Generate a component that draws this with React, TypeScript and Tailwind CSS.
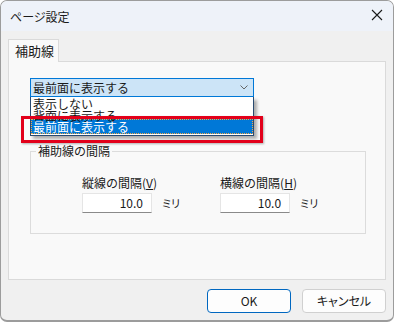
export default function App() {
  return (
    <div className="w-[395px] h-[323px] bg-white font-['Noto_Sans_CJK_JP',sans-serif] text-[#1a1a1a]">
      <div className="w-[394px] h-[322px] flex flex-col bg-[#f0f0f0] border border-b-2 border-[#9c9c9c] rounded-[7px] overflow-hidden">
        {/* タイトルバー */}
        <div className="h-[30px] shrink-0 bg-[#eef2f9] flex items-center justify-between pl-[9px] pr-[9px]">
          <span className="text-[12px] leading-[14px] mt-[2px] [font-feature-settings:'palt']">ページ設定</span>
          <svg width="12" height="12" viewBox="0 0 12 12" className="mr-[1px] -mt-[2px]">
            <path d="M1 1 L11 11 M11 1 L1 11" stroke="#1a1a1a" strokeWidth="1.1" fill="none" />
          </svg>
        </div>

        {/* 本体 */}
        <div className="flex-1 flex flex-col px-[7px] pt-[8px]">
          <div className="w-[51px] h-[23px] bg-[#f9f9f9] border border-b-0 border-[#dadada] relative z-10 -mb-px pl-[6px] text-[13px] leading-[22px]">
            補助線
          </div>
          <div className="h-[219px] bg-[#f9f9f9] border border-[#dadada] pl-[21px] pt-[16px] w-[378px]">
            {/* コンボボックス */}
            <div className="relative w-[224px]">
              <div className="h-[19px] bg-[#cce4f7] border border-[#0078d7] flex items-center justify-between pl-[2px] pr-[5px]">
                <span className="text-[12px] leading-[14px]">最前面に表示する</span>
                <svg width="8" height="5" viewBox="0 0 8 5">
                  <path d="M0.5 0.5 L4 4 L7.5 0.5" stroke="#666" strokeWidth="1" fill="none" />
                </svg>
              </div>

              {/* ドロップダウンリスト */}
              <div className="absolute left-0 top-full w-[224px] h-[39px] bg-white border border-t-0 border-[#2a4a70] shadow-[3px_3px_3px_rgba(0,0,0,0.3)] overflow-hidden z-20">
                <div className="pl-[2px] text-[12px] leading-[12px] pt-[1px]">表示しない</div>
                <div className="pl-[2px] text-[12px] leading-[12px]">背面に表示する</div>
                <div className="-mt-[3px] h-[15px] bg-[#0078d7] border border-dotted border-[#f5a742] pl-[1px] text-white text-[12px] leading-[13px]">
                  最前面に表示する
                </div>
              </div>

              {/* 強調枠 */}
              <div className="absolute left-[-9px] top-[38px] w-[242px] h-[27px] border-[3px] border-[#e2001a] shadow-[1px_1px_2px_rgba(0,0,0,0.3)] z-30" />
            </div>

            {/* 補助線の間隔 */}
            <fieldset className="mt-[47px] w-[336px] h-[90px] border border-[#dcdcdc]">
              <legend className="ml-[5px] px-[2px] text-[12px] leading-[14px]">補助線の間隔</legend>
              <div className="flex gap-[40px] pl-[51px] pt-[17px]">
                <div className="flex flex-col gap-[2px]">
                  <span className="text-[12px] leading-[16px]">
                    縦線の間隔(<u>V</u>)
                  </span>
                  <div className="flex items-center gap-[10px]">
                    <div className="w-[70px] h-[20px] bg-white border border-[#e5e5e5] border-b-[#8a8a8a] text-right pr-[8px] text-[12px] leading-[17px]">
                      10.0
                    </div>
                    <span className="text-[11px] leading-[14px] [font-feature-settings:'palt']">ミリ</span>
                  </div>
                </div>
                <div className="flex flex-col gap-[2px]">
                  <span className="text-[12px] leading-[16px]">
                    横線の間隔(<u>H</u>)
                  </span>
                  <div className="flex items-center gap-[10px]">
                    <div className="w-[70px] h-[20px] bg-white border border-[#e5e5e5] border-b-[#8a8a8a] text-right pr-[8px] text-[12px] leading-[17px]">
                      10.0
                    </div>
                    <span className="text-[11px] leading-[14px] [font-feature-settings:'palt']">ミリ</span>
                  </div>
                </div>
              </div>
            </fieldset>
          </div>

          {/* ボタン */}
          <div className="flex justify-end gap-[11px] pt-[9px] pr-[0px]">
            <button className="w-[84px] h-[24px] bg-[#fdfdfd] border border-[#0067c0] rounded-[4px] text-[12px] leading-[14px]">
              OK
            </button>
            <button className="w-[84px] h-[24px] bg-[#fdfdfd] border border-[#d0d0d0] rounded-[4px] text-[12px] leading-[14px] [font-feature-settings:'palt']">
              キャンセル
            </button>
          </div>
        </div>
      </div>
    </div>
  );
}
